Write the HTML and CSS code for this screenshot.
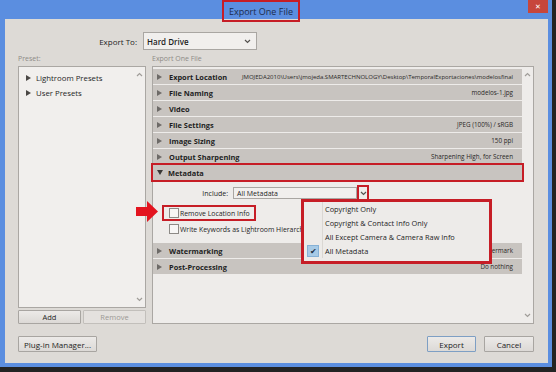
FILE: index.html
```html
<!DOCTYPE html>
<html lang="en">

<head>
    <meta charset="UTF-8">
    <meta name="viewport" content="width=device-width, initial-scale=1.0">
    <title>Export One File</title>
    <link rel="stylesheet" href="styles.css">
</head>

<body>
    <div class="window">
        <div class="titlebar">
            <div class="title">Export One File</div>
            <div class="close">&#x2715;</div>
        </div>

        <div class="client">
            <div class="export-to">
                <label class="export-label">Export To:</label>
                <div class="select drive-select">
                    <span>Hard Drive</span>
                    <svg class="chev" width="7" height="5" viewBox="0 0 7 5"><polyline points="1,1 3.5,3.5 6,1" /></svg>
                </div>
            </div>

            <div class="panes">
                <div class="pane-label">Preset:</div>
                <div class="pane-label">Export One File</div>

                <div class="preset-col">
                    <div class="preset-list">
                        <ul class="tree">
                            <li><span class="tri"></span>Lightroom Presets</li>
                            <li><span class="tri"></span>User Presets</li>
                        </ul>
                        <div class="scroll">
                            <svg class="chev" width="7" height="5" viewBox="0 0 7 5"><polyline points="1,4 3.5,1.5 6,4" /></svg>
                            <svg class="chev" width="7" height="5" viewBox="0 0 7 5"><polyline points="1,1 3.5,3.5 6,1" /></svg>
                        </div>
                    </div>
                    <div class="preset-buttons">
                        <button class="btn">Add</button>
                        <button class="btn" disabled>Remove</button>
                    </div>
                </div>

                <div class="settings">
                    <div class="sections">
                        <div class="section"><span class="tri"></span><b>Export Location</b><span class="value path">JMOJEDA2010\Users\jmojeda.SMARTECHNOLOGY\Desktop\TemporalExportaciones\modelosfinal</span></div>
                        <div class="section"><span class="tri"></span><b>File Naming</b><span class="value">modelos-1.jpg</span></div>
                        <div class="section"><span class="tri"></span><b>Video</b></div>
                        <div class="section"><span class="tri"></span><b>File Settings</b><span class="value">JPEG (100%) / sRGB</span></div>
                        <div class="section"><span class="tri"></span><b>Image Sizing</b><span class="value">150 ppi</span></div>
                        <div class="section"><span class="tri"></span><b>Output Sharpening</b><span class="value">Sharpening High, for Screen</span></div>
                        <div class="section open marked"><span class="tri down"></span><b>Metadata</b></div>

                        <div class="meta-body">
                            <div class="include-row">
                                <label class="include-label">Include:</label>
                                <div class="select include-select"><span>All Metadata</span></div>
                                <div class="include-arrow">
                                    <svg class="chev" width="7" height="5" viewBox="0 0 7 5"><polyline points="1,1 3.5,3.5 6,1" /></svg>
                                </div>
                            </div>
                            <div class="check-row">
                                <span class="check marked"><span class="box"></span>Remove Location Info</span>
                            </div>
                            <div class="check-row">
                                <span class="check"><span class="box"></span>Write Keywords as Lightroom Hierarchy</span>
                            </div>

                            <svg class="pointer" width="22" height="21" viewBox="0 0 22 21">
                                <polygon points="0,6 11,6 11,0 22,10.5 11,21 11,15 0,15" />
                            </svg>

                            <div class="menu">
                                <div class="menu-item"><span class="gutter"></span>Copyright Only</div>
                                <div class="menu-item"><span class="gutter"></span>Copyright &amp; Contact Info Only</div>
                                <div class="menu-item"><span class="gutter"></span>All Except Camera &amp; Camera Raw Info</div>
                                <div class="menu-item checked"><span class="gutter"><span class="tick">&#x2714;</span></span>All Metadata</div>
                            </div>
                        </div>

                        <div class="section"><span class="tri"></span><b>Watermarking</b><span class="value">No watermark</span></div>
                        <div class="section"><span class="tri"></span><b>Post-Processing</b><span class="value">Do nothing</span></div>
                    </div>
                    <div class="scroll">
                        <svg class="chev" width="7" height="5" viewBox="0 0 7 5"><polyline points="1,4 3.5,1.5 6,4" /></svg>
                        <svg class="chev" width="7" height="5" viewBox="0 0 7 5"><polyline points="1,1 3.5,3.5 6,1" /></svg>
                    </div>
                </div>
            </div>

            <div class="footer">
                <button class="btn plugin-btn">Plug-in Manager...</button>
                <button class="btn export-btn">Export</button>
                <button class="btn cancel-btn">Cancel</button>
            </div>
        </div>
    </div>
</body>

</html>
```

FILE: styles.css
```css
body {
    margin: 0;
    padding: 0;
    background-color: #232323;
    font-family: "Open Sans", "Noto Sans", sans-serif;
    font-size: 8px;
    color: #1e1e1e;
}

.window {
    width: 552px;
    height: 367px;
    box-sizing: border-box;
    padding: 0 4px 4px 5px;
    background-color: #5b8ee0;
    display: flex;
    flex-direction: column;
}

/* title bar */
.titlebar {
    height: 19px;
    display: flex;
    align-items: flex-start;
    flex-shrink: 0;
}

.title {
    position: relative;
    z-index: 1;
    margin-left: 217px;
    width: 78px;
    height: 22px;
    margin-bottom: -3px;
    box-sizing: border-box;
    border: 2px solid #c61d26;
    display: flex;
    align-items: center;
    justify-content: center;
    font-size: 9px;
    color: #1b2b4c;
}

.close {
    margin-left: auto;
    width: 20px;
    height: 13px;
    background-color: #c7463c;
    color: #fff;
    font-size: 7px;
    display: flex;
    align-items: center;
    justify-content: center;
}

/* client area */
.client {
    flex: 1;
    background-color: #dddad6;
    padding: 13px 14px 11px 13px;
    display: flex;
    flex-direction: column;
}

.export-to {
    height: 18px;
    display: flex;
    align-items: center;
    gap: 6px;
}

.export-label {
    width: 119px;
    text-align: right;
    font-size: 8px;
}

.select {
    box-sizing: border-box;
    border: 1px solid #a9a6a2;
    background-color: #f1efed;
    display: flex;
    align-items: center;
    padding: 0 5px 0 3px;
}

.drive-select {
    width: 114px;
    height: 18px;
    justify-content: space-between;
    font-size: 8px;
    font-weight: 600;
}

.chev {
    fill: none;
    stroke: #55524f;
    stroke-width: 1.2;
}

.panes {
    flex: 1;
    margin-top: 4px;
    display: grid;
    grid-template-columns: 128px 382px;
    grid-template-rows: 12px 1fr;
    column-gap: 6px;
}

.pane-label {
    color: #8e8b87;
    font-size: 7px;
    line-height: 9px;
}

/* preset column */
.preset-col {
    display: flex;
    flex-direction: column;
    gap: 2px;
}

.preset-list {
    flex: 1;
    border: 1px solid #aaa7a3;
    background-color: #f1efed;
    display: flex;
}

.tree {
    flex: 1;
    list-style: none;
    margin: 0;
    padding: 3px 0 0 7px;
    font-size: 7.8px;
}

.tree li {
    height: 15px;
    display: flex;
    align-items: center;
}

.tree .tri {
    border-left-color: #4a4744;
    margin-right: 5px;
}

.scroll {
    width: 11px;
    display: flex;
    flex-direction: column;
    justify-content: space-between;
    align-items: center;
    padding: 5px 0 5px;
}

.scroll .chev {
    stroke: #a09d99;
}

.preset-buttons {
    height: 14px;
    display: flex;
    gap: 2px;
}

.preset-buttons .btn {
    flex: 1;
}

.btn {
    box-sizing: border-box;
    border: 1px solid #a8a5a1;
    border-radius: 1px;
    background: linear-gradient(#eceae8, #dcd9d6);
    font-family: inherit;
    font-size: 7.5px;
    color: #1e1e1e;
    padding: 0;
}

.btn:disabled {
    color: #9c9995;
    background: #e4e1de;
    border-color: #c2bfbb;
}

/* settings column */
.settings {
    border: 1px solid #aaa7a3;
    background-color: #eeecea;
    display: flex;
    min-width: 0;
}

.sections {
    flex: 1;
    min-width: 0;
    padding-top: 2px;
}

.section {
    height: 15px;
    margin-bottom: 1px;
    background-color: #c8c4c0;
    display: flex;
    align-items: center;
    padding: 0 9px 0 4px;
    white-space: nowrap;
}

.section b {
    font-size: 7.4px;
    font-weight: 700;
    flex-shrink: 0;
}

.section .value {
    margin-left: auto;
    font-size: 6.3px;
    color: #2a2827;
}

.section .path {
    font-size: 6px;
}

.section.marked {
    outline: 2px solid #c61d26;
}

.tri {
    width: 0;
    height: 0;
    flex-shrink: 0;
    border-left: 5px solid #6d6a67;
    border-top: 3.5px solid transparent;
    border-bottom: 3.5px solid transparent;
    margin-right: 7px;
}

.tri.down {
    border-left: 3.5px solid transparent;
    border-right: 3.5px solid transparent;
    border-top: 5px solid #3a3836;
    border-bottom: 0;
    margin-right: 5px;
}

.meta-body {
    position: relative;
    height: 61px;
    margin-bottom: 1px;
    box-sizing: border-box;
    padding: 6px 0 5px 16px;
}

.include-row {
    height: 12px;
    display: flex;
    align-items: center;
    margin-bottom: 6px;
}

.include-label {
    width: 59px;
    text-align: right;
    margin-right: 5px;
    font-size: 7px;
}

.include-select {
    width: 124px;
    height: 12px;
    font-size: 7px;
}

.include-arrow {
    width: 12px;
    height: 16px;
    box-sizing: border-box;
    border: 2px solid #c61d26;
    display: flex;
    align-items: center;
    justify-content: center;
}

.check-row {
    height: 16px;
    display: flex;
    align-items: center;
}

.check {
    display: flex;
    align-items: center;
    font-size: 6.9px;
    padding: 1px 4px 1px 5px;
    margin-left: -5px;
}

.check.marked {
    outline: 2px solid #c61d26;
}

.box {
    width: 8px;
    height: 8px;
    border: 1px solid #8d8a86;
    background-color: #f7f6f5;
    margin-right: 1px;
}

.pointer {
    position: absolute;
    left: -17px;
    top: 20px;
    fill: #e3141f;
}

/* open dropdown */
.menu {
    position: absolute;
    left: 148px;
    top: 18px;
    width: 191px;
    height: 65px;
    box-sizing: border-box;
    border: 3px solid #c61d26;
    background-color: #edebe9;
    font-size: 7.4px;
}

.menu-item {
    height: 14px;
    display: flex;
    align-items: center;
}

.gutter {
    width: 18px;
    height: 14px;
    margin-right: 2px;
    border-right: 1px solid #dad7d3;
    display: flex;
    align-items: center;
    justify-content: center;
}

.tick {
    width: 12px;
    height: 12px;
    box-sizing: border-box;
    background-color: #a7cae6;
    border: 1px solid #86b1d6;
    font-size: 8px;
    line-height: 10px;
    text-align: center;
    color: #1d2d40;
}

/* bottom buttons */
.footer {
    margin-top: 12px;
    height: 16px;
    display: flex;
    gap: 8px;
}

.footer .btn {
    font-size: 8px;
}

.plugin-btn {
    width: 79px;
}

.export-btn {
    width: 49px;
    margin-left: auto;
    border-color: #7e9fc4;
}

.cancel-btn {
    width: 50px;
}
```
